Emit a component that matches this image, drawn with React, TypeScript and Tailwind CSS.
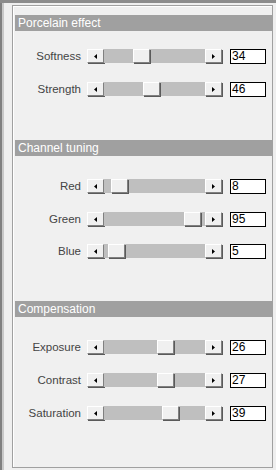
import React from "react";

const font = { fontFamily: '"Liberation Sans", Arial, sans-serif' };

function Arrow({ dir }: { dir: "left" | "right" }) {
  return (
    <svg width="3" height="5" viewBox="0 0 3 5" className="block">
      {dir === "left" ? (
        <path d="M3 0 L0 2.5 L3 5 Z" fill="#000" />
      ) : (
        <path d="M0 0 L3 2.5 L0 5 Z" fill="#000" />
      )}
    </svg>
  );
}

function Btn({ children }: { children?: React.ReactNode }) {
  return (
    <div className="w-[17px] h-[14px] bg-[#f0f0f0] border-t border-l border-t-white border-l-white border-r border-b border-r-[#808080] border-b-[#808080] shadow-[1px_1px_0_#5a5a5a] flex items-center justify-center shrink-0">
      {children}
    </div>
  );
}

function Row({
  label,
  value,
  mt,
  min = 0,
  max = 100,
}: {
  label: string;
  value: number;
  mt: string;
  min?: number;
  max?: number;
}) {
  const left = Math.round(((value - min) / (max - min)) * 84);
  return (
    <div className={`flex items-start h-[15px] ${mt}`}>
      <div className="w-[66px] text-right text-[11.5px] leading-[14px] text-[#444]">{label}</div>
      <div className="ml-[6px] w-[135px] h-[14px] flex shrink-0">
        <Btn>
          <Arrow dir="left" />
        </Btn>
        <div className="relative flex-1 h-[14px] bg-[#bfbfbf]">
          <div className="absolute top-0" style={{ left }}>
            <Btn />
          </div>
        </div>
        <Btn>
          <Arrow dir="right" />
        </Btn>
      </div>
      <div className="ml-[8px] w-[36px] h-[15px] bg-white border border-black text-[12px] leading-[13px] text-black pl-[1px]">
        {value}
      </div>
    </div>
  );
}

function Header({ title, mt }: { title: string; mt: string }) {
  return (
    <div className={`h-[16px] bg-[#a0a0a0] text-white text-[12px] leading-[16px] pl-[3px] ${mt}`}>
      {title}
    </div>
  );
}

export default function App() {
  return (
    <div className="w-[276px] h-[470px] bg-[#efefef] flex flex-col overflow-hidden" style={font}>
      <div className="h-[3px] bg-[#8c8c8c] shrink-0" />
      <div className="flex flex-1">
        <div className="w-[2px] bg-[#808080]" />
        <div className="w-[2px] bg-[#c8c8c8]" />
        <div className="flex-1 flex flex-col pl-[8px] pr-[3px] pt-[2px] pb-[2px]">
          <div className="flex-1 border border-[#a0a0a0] shadow-[inset_1px_1px_0_#fff] bg-[#f0f0f0] pl-[2px] pt-[9px]">
            <Header title="Porcelain effect" mt="mt-0" />
            <Row label="Softness" value={34} mt="mt-[18px]" />
            <Row label="Strength" value={46} mt="mt-[18px]" />
            <Header title="Channel tuning" mt="mt-[43px]" />
            <Row label="Red" value={8} mt="mt-[23px]" />
            <Row label="Green" value={95} mt="mt-[18px]" />
            <Row label="Blue" value={5} mt="mt-[17px]" />
            <Header title="Compensation" mt="mt-[42px]" />
            <Row label="Exposure" value={26} min={-100} mt="mt-[23px]" />
            <Row label="Contrast" value={27} min={-100} mt="mt-[18px]" />
            <Row label="Saturation" value={39} min={-100} mt="mt-[18px]" />
          </div>
        </div>
      </div>
    </div>
  );
}
